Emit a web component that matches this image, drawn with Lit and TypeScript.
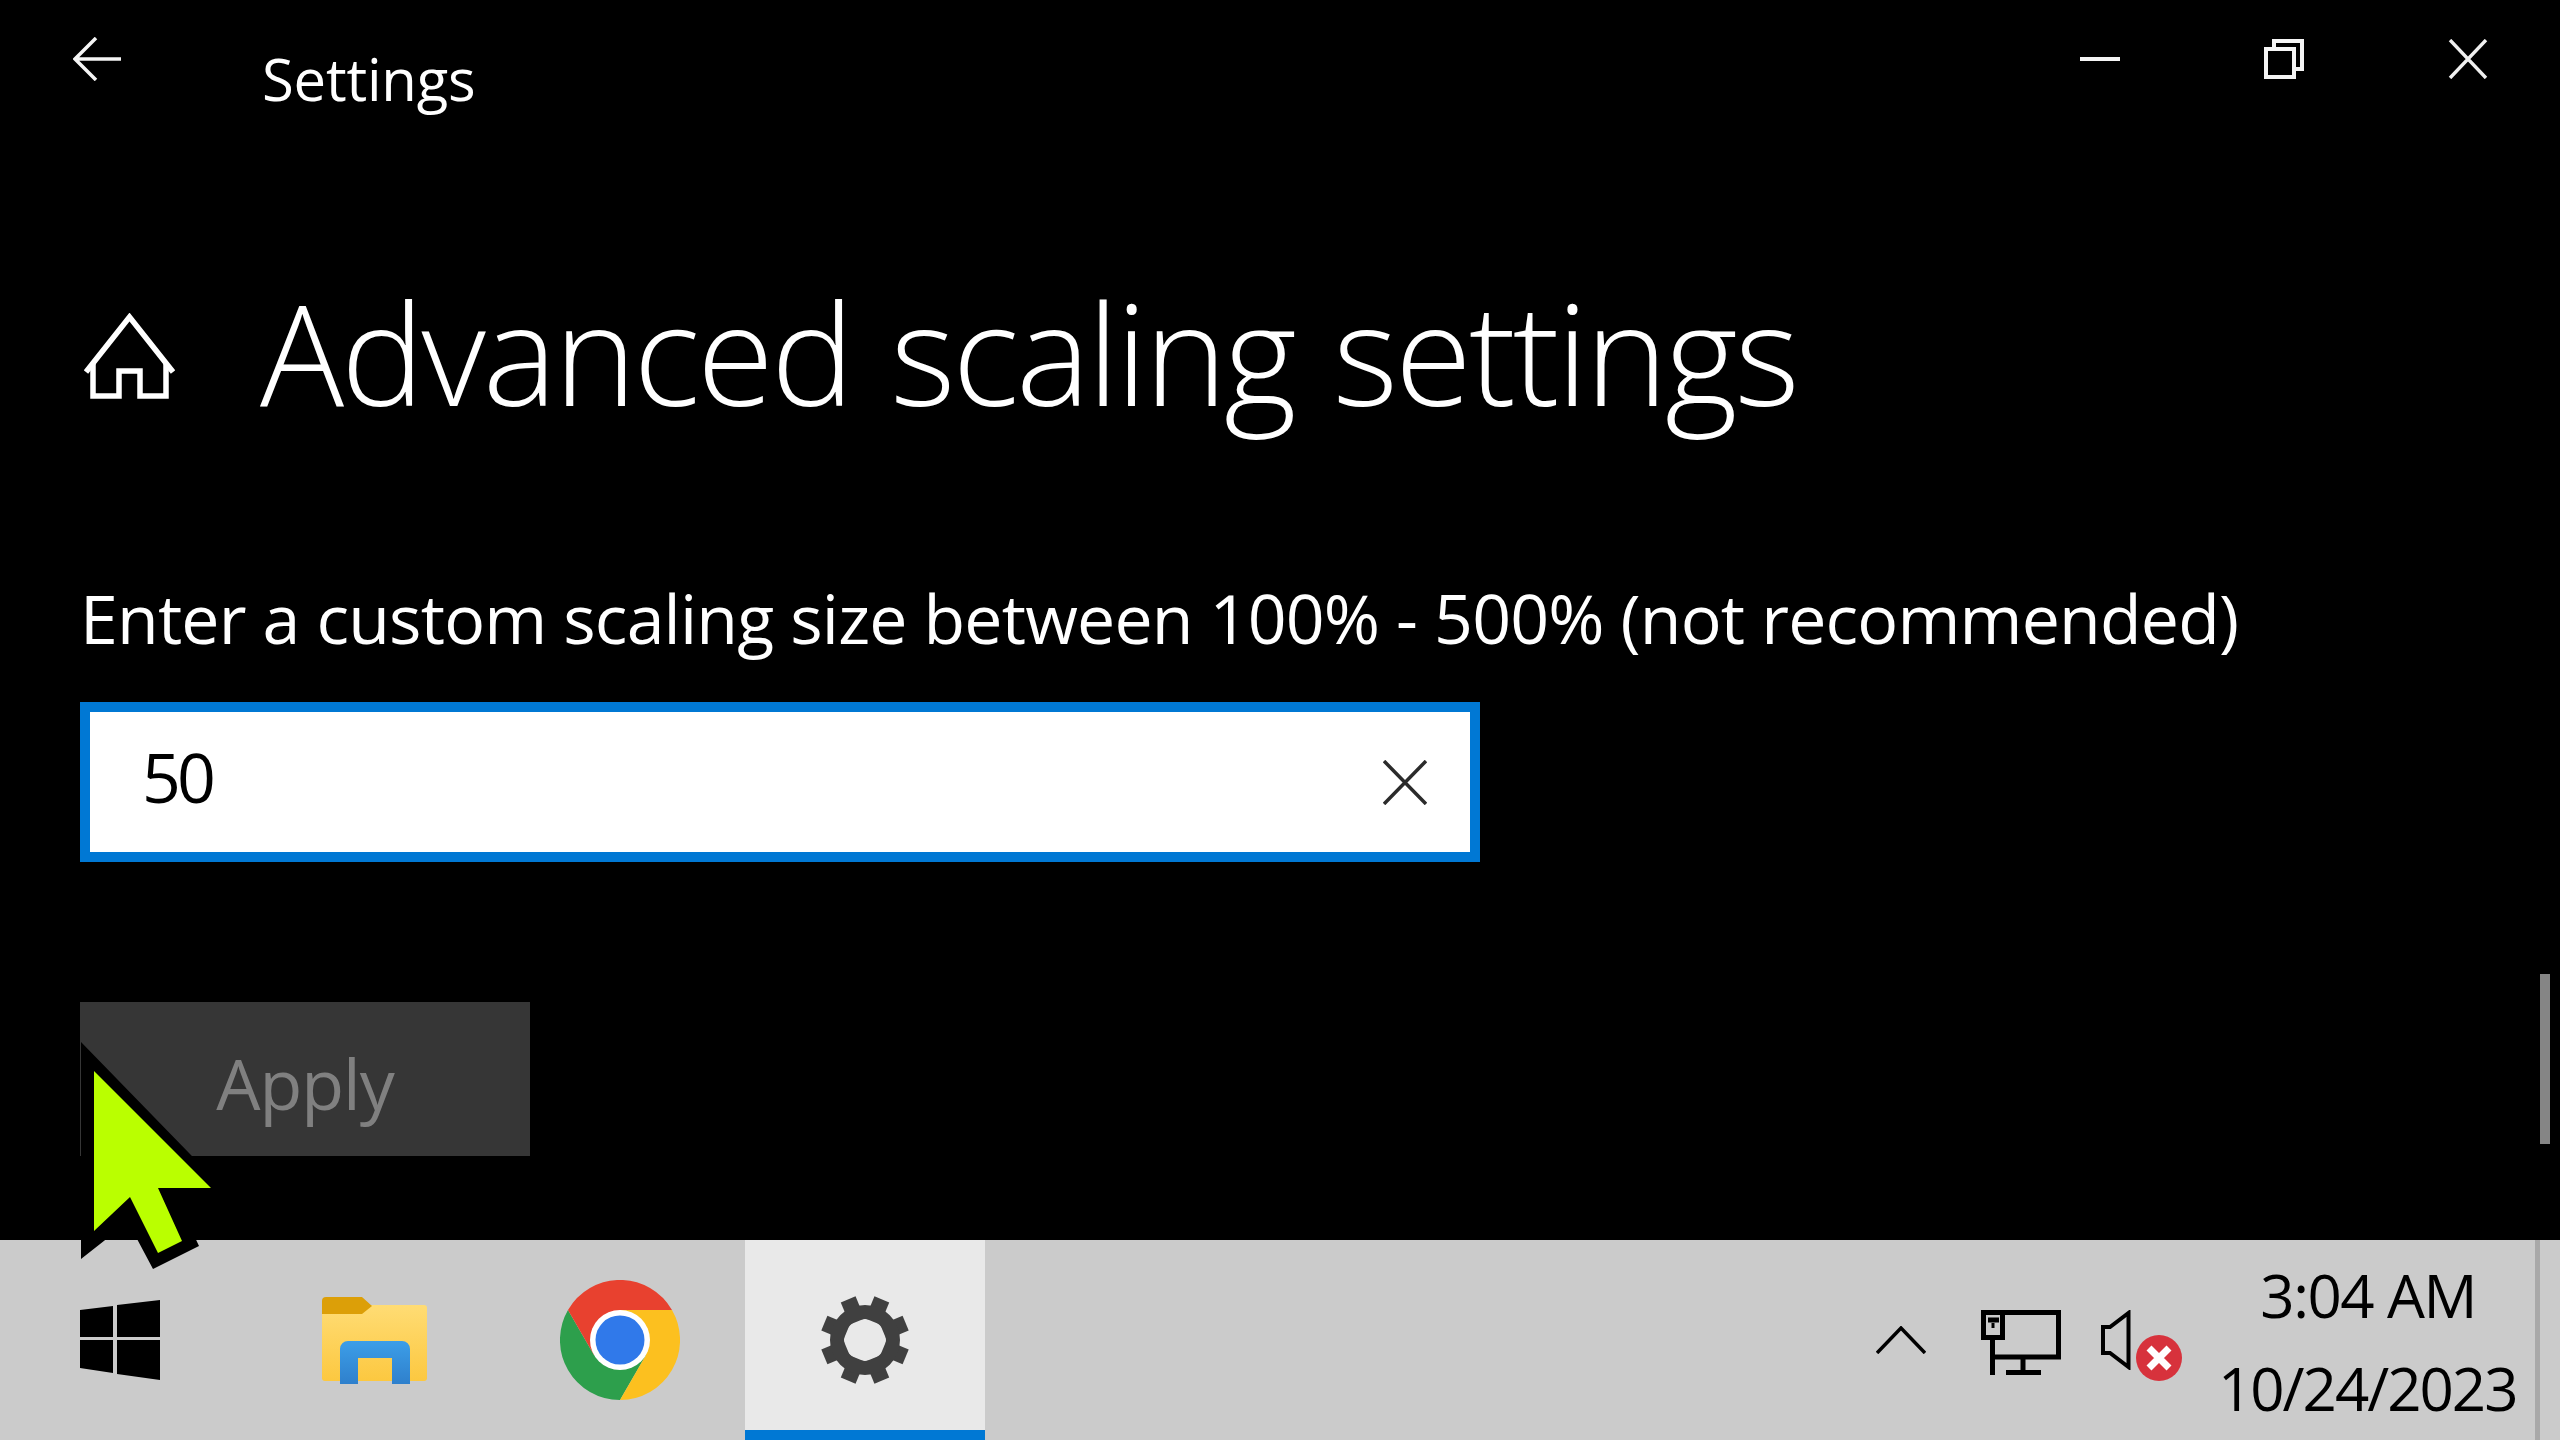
import { LitElement, html, css, svg } from "lit";
import { customElement } from "lit/decorators.js";

const gearTeeth = [22.5, 67.5, 112.5, 157.5, 202.5, 247.5, 292.5, 337.5];

@customElement("app-root")
export class AppRoot extends LitElement {
  static styles = css`
    :host { display: block; width: 2560px; height: 1440px; overflow: hidden; background: #000; position: relative; font-family: "Open Sans", "Noto Sans", sans-serif; color: #fff; }
    svg { display: block; flex: none; }
    .main { height: 1240px; display: flex; flex-direction: column; }
    .titlebar { height: 118px; display: flex; }
    .back { margin: 37px 0 0 73px; }
    .app-title { margin-left: 141px; font-size: 58px; line-height: 80px; margin-top: 39px; letter-spacing: -0.2px; height: 79px; }
    .controls { margin-left: auto; display: flex; }
    .ctl { width: 184px; height: 118px; display: flex; justify-content: center; padding-top: 39px; box-sizing: border-box; }
    .heading { display: flex; margin-top: 149px; height: 170px; }
    .home { margin: 46px 0 0 84px; }
    h1 { margin: 0 0 0 85px; font-size: 140px; font-weight: 300; line-height: 170px; letter-spacing: -3px; word-spacing: 5.6px; white-space: nowrap; }
    .label { margin: 136px 0 0 80px; font-size: 68px; line-height: 90px; white-space: nowrap; letter-spacing: -0.8px; }
    .input { margin: 39px 0 0 80px; width: 1400px; height: 160px; box-sizing: border-box; border: 10px solid #0078d4; background: #fff; display: flex; align-items: center; justify-content: space-between; padding: 0 43px 0 52px; color: #000; }
    .value { font-size: 68px; line-height: 90px; letter-spacing: -4px; margin-top: -11px; }
    .apply { margin: 140px 0 0 80px; width: 450px; height: 154px; background: #363636; color: #808080; display: flex; justify-content: center; font-size: 70px; line-height: 96px; padding-top: 33px; box-sizing: border-box; letter-spacing: -1px; }
    .scroll { position: absolute; left: 2540px; top: 974px; width: 10px; height: 170px; background: #858585; }
    .taskbar { height: 200px; background: #cbcbcb; display: flex; align-items: center; color: #000; position: relative; }
    .start { margin-left: 80px; }
    .folder { margin-left: 162px; }
    .chrome { margin-left: 133px; }
    .active { margin-left: 65px; width: 240px; height: 200px; box-sizing: border-box; background: #e9e9e9; border-bottom: 10px solid #0078d4; display: flex; align-items: center; justify-content: center; padding-top: 10px; }
    .tray { margin-left: auto; display: flex; align-items: center; height: 100%; }
    .chev { margin-right: 55px; }
    .net { margin-right: 40px; margin-top: 5px; }
    .vol { margin-right: 87px; }
    .clock { width: 295px; text-align: right; font-size: 60px; line-height: 93px; letter-spacing: -2px; white-space: nowrap; margin-right: 22px; margin-top: 3px; }
    .time { padding-right: 37px; letter-spacing: -1.5px; }
    .divider { width: 5px; height: 100%; background: #a9a9a9; margin-right: 20px; }
    .badge { position: absolute; left: 2136px; top: 95px; }
    .cursor { position: absolute; left: 0; top: 0; pointer-events: none; }
  `;

  render() {
    return html`
      <div class="main">
        <div class="titlebar">
          <svg class="back" width="48" height="44" viewBox="0 0 48 44" fill="none" stroke="#f5f5f5" stroke-width="3.5">
            <path d="M48 22H2M23 1L2 22l21 21" />
          </svg>
          <div class="app-title">Settings</div>
          <div class="controls">
            <div class="ctl">
              <svg width="40" height="40" viewBox="0 0 40 40"><rect y="18" width="40" height="4" fill="#f5f5f5" /></svg>
            </div>
            <div class="ctl">
              <svg width="40" height="40" viewBox="0 0 40 40" fill="none" stroke="#f5f5f5" stroke-width="4">
                <rect x="2" y="10" width="28" height="28" />
                <path d="M10 8V2h28v28h-6" />
              </svg>
            </div>
            <div class="ctl">
              <svg width="40" height="40" viewBox="0 0 40 40" fill="none" stroke="#f0f0f0" stroke-width="3.4"><path d="M2 1l36 38M38 1L2 39" /></svg>
            </div>
          </div>
        </div>
        <div class="heading">
          <svg class="home" width="91" height="86" viewBox="0 0 91 86" fill="none" stroke="#fff" stroke-width="5.5">
            <path d="M2 59L45.500 4 89 59" />
            <path d="M9 51V83H35V58H56V83H82V51" />
          </svg>
          <h1>Advanced scaling settings</h1>
        </div>
        <div class="label">Enter a custom scaling size between 100% - 500% (not recommended)</div>
        <div class="input">
          <span class="value">50</span>
          <svg width="44" height="45" viewBox="0 0 44 45" fill="none" stroke="#2b2b2b" stroke-width="3.5"><path d="M1 1l42 43M43 1L1 44" /></svg>
        </div>
        <div class="apply">Apply</div>
      </div>
      <div class="scroll"></div>
      <div class="taskbar">
        <svg class="start" width="80" height="80" viewBox="0 0 80 80" fill="#000">
          <polygon points="0,10 33,6 33,37 0,37" /><polygon points="37,5 80,0 80,37 37,37" />
          <polygon points="0,40 33,40 33,73 0,68" /><polygon points="37,40 80,40 80,80 37,74" />
        </svg>
        <svg class="folder" width="105" height="88" viewBox="0 0 105 88">
          <defs>
            <linearGradient id="fb" x1="0" y1="0" x2="0" y2="1"><stop offset="0" stop-color="#ffdc74" /><stop offset="1" stop-color="#fcc840" /></linearGradient>
            <linearGradient id="bl" x1="0" y1="0" x2="0" y2="1"><stop offset="0" stop-color="#3c9ee8" /><stop offset="1" stop-color="#2f80cc" /></linearGradient>
          </defs>
          <path d="M3 9H102a3 3 0 0 1 3 3V82a3 3 0 0 1-3 3H3a3 3 0 0 1-3-3V12a3 3 0 0 1 3-3z" fill="url(#fb)" />
          <path d="M4 1H40L50 10 40 18H0V5a4 4 0 0 1 4-4z" fill="#dc9f08" />
          <path d="M18 88V53a8 8 0 0 1 8-8H80a8 8 0 0 1 8 8V88H70V62H36V88z" fill="url(#bl)" />
        </svg>
        <svg class="chrome" width="120" height="120" viewBox="0 0 120 120">
          <path d="M8 30L34 75H86L60 120A60 60 0 0 1 8 30z" fill="#2d9f4c" />
          <path d="M60 30H112A60 60 0 0 1 60 120L86 75z" fill="#fcc01f" />
          <path d="M112 30H60L34 75 8 30A60 60 0 0 1 112 30z" fill="#e8412f" />
          <circle cx="60" cy="60" r="30" fill="#fff" /><circle cx="60" cy="60" r="24.500" fill="#3079ea" />
        </svg>
        <div class="active">
          <svg width="90" height="90" viewBox="0 0 90 90" fill="#404040">
            ${gearTeeth.map((a) => svg`<rect x="37" y="1" width="16" height="24" transform="rotate(${a} 45 45)" />`)}
            <circle cx="45" cy="45" r="28" fill="none" stroke="#404040" stroke-width="14" />
          </svg>
        </div>
        <div class="tray">
          <svg class="chev" width="50" height="28" viewBox="0 0 50 28" fill="none" stroke="#000" stroke-width="3.500"><path d="M1 27L25 2l24 25" /></svg>
          <svg class="net" width="80" height="65" viewBox="0 0 80 65" fill="none" stroke="#000" stroke-width="5">
            <path d="M20 2.500H77.500V47H12" /><rect x="2.500" y="2.500" width="19" height="25" />
            <path d="M11.500 27V65M42 47V62M25 62.500H60M7 10H18" /><path d="M12 13v5" stroke-width="3" />
          </svg>
          <svg class="vol" width="30" height="60" viewBox="0 0 30 60" fill="none" stroke="#000" stroke-width="4">
            <path d="M2 17H9L27.500 3V57L9 43H2z" />
          </svg>
          <svg class="badge" width="46" height="46" viewBox="0 0 46 46">
            <circle cx="23" cy="23" r="23" fill="#d7323c" /><path d="M13 13l20 20M33 13L13 33" stroke="#fff" stroke-width="7" />
          </svg>
          <div class="clock"><div class="time">3:04 AM</div><div>10/24/2023</div></div>
          <div class="divider"></div>
        </div>
      </div>
      <svg class="cursor" width="300" height="1300" viewBox="0 0 300 1300">
        <polygon points="81,1042 225,1190 175,1195 199,1246 153,1269 128,1222 81,1259" fill="#000" />
        <polygon points="94,1071 211,1188 158,1188 182,1241 158,1253 130,1197 94,1231" fill="#baff00" />
      </svg>
    `;
  }
}
